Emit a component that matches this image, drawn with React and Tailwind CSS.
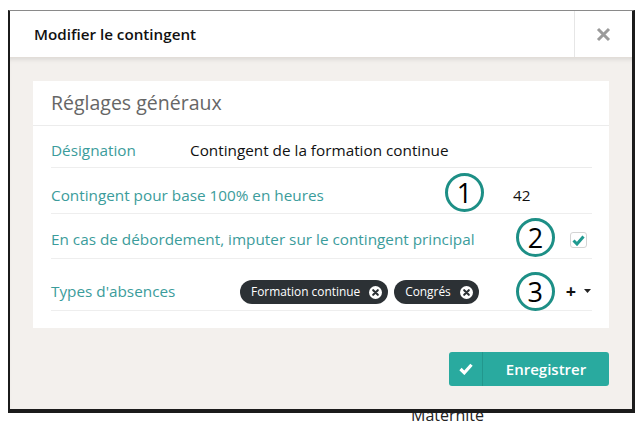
import React from 'react'

const font = { fontFamily: '"Open Sans", "Noto Sans", sans-serif' }

const Marker = ({ n }) => (
  <div className="w-[39px] h-[39px] rounded-full border-[3px] border-[#1d8f86] bg-white flex items-center justify-center text-[27px] font-normal text-black leading-none">
    {n}
  </div>
)

const Tag = ({ label }) => (
  <span className="flex items-center h-[24px] pl-[11px] pr-[6px] rounded-full bg-[#2c3135] text-white text-[11.9px] leading-none">
    <span>{label}</span>
    <svg className="ml-[9px]" width="13" height="13" viewBox="0 0 14 14">
      <circle cx="7" cy="7" r="7" fill="#fff" />
      <path d="M4.5 4.5 L9.5 9.5 M9.5 4.5 L4.5 9.5" stroke="#2c3135" strokeWidth="2.2" strokeLinecap="round" />
    </svg>
  </span>
)

export default function App() {
  return (
    <div className="relative w-[642px] h-[422px] bg-white overflow-hidden" style={font}>
      {/* leftover page text behind the modal */}
      <div className="absolute left-[411px] top-[403px] text-[16px] text-[#222]">Maternité</div>

      <div className="relative ml-[8px] mt-[10px] w-[627px] h-[403px] flex flex-col bg-white border-t border-t-[#8a8a8a] border-l-2 border-l-[#1b1b1b] border-r-[3px] border-r-[#1b1b1b] border-b-4 border-b-[#1b1b1b]">
        {/* header */}
        <div className="flex h-[46px] bg-white">
          <div className="flex-1 flex items-center pl-[24px] text-[15.2px] font-semibold text-[#111]">
            Modifier le contingent
          </div>
          <div className="w-[58px] flex items-center justify-center border-l border-[#e6e6e6]">
            <svg width="15" height="15" viewBox="0 0 15 15">
              <path d="M2 2 L13 13 M13 2 L2 13" stroke="#9a9a9a" strokeWidth="3" />
            </svg>
          </div>
        </div>

        {/* body */}
        <div className="flex-1 bg-[#f3f0ed] px-[23px] pt-[23px] border-t border-[#e2ddd8] shadow-[inset_0_4px_5px_-3px_rgba(0,0,0,0.12)]">
          <div className="bg-white pb-[17px]">
            <div className="h-[45px] flex items-center px-[18px] border-b border-[#ececec] text-[19.5px] text-[#666]">
              Réglages généraux
            </div>

            <div className="pl-[18px] pr-[17px] text-[15.3px]">
              {/* row 1 */}
              <div className="flex items-end h-[42px]">
                <div className="w-[139px] h-full flex items-end pb-[5px] border-b border-[#eeeeee] text-[#3b9c9b]">Désignation</div>
                <div className="flex-1 h-full flex items-end pb-[5px] border-b border-[#ebebeb] text-[#111]">
                  Contingent de la formation continue
                </div>
              </div>

              {/* row 2 */}
              <div className="flex items-end h-[46px] border-b border-[#eeeeee]">
                <div className="flex-1 pb-[6px] text-[#3b9c9b]">Contingent pour base 100% en heures</div>
                <div className="mb-[1px] mr-[21px]"><Marker n="1" /></div>
                <div className="w-[87px] pl-[8px] pb-[6px] text-[#111]">42</div>
              </div>

              {/* row 3 */}
              <div className="flex items-end h-[45px] border-b border-[#eeeeee]">
                <div className="flex-1 pb-[7px] text-[#3b9c9b]">En cas de débordement, imputer sur le contingent principal</div>
                <div className="mb-[1px] mr-[15px]"><Marker n="2" /></div>
                <div className="w-[22px] h-full flex items-end pb-[10px]">
                  <div className="w-[17px] h-[16px] rounded-[3px] border border-[#d4d4d4] flex items-center justify-center">
                    <svg width="13" height="11" viewBox="0 0 13 11">
                      <path d="M1.5 5.5 L5 9 L11.5 1.5" fill="none" stroke="#1f9a90" strokeWidth="3" />
                    </svg>
                  </div>
                </div>
              </div>

              {/* row 4 */}
              <div className="flex items-end h-[52px] border-b border-[#eeeeee]">
                <div className="w-[189px] pb-[7px] text-[#3b9c9b]">Types d'absences</div>
                <div className="flex gap-[6px] pb-[6px]">
                  <Tag label="Formation continue" />
                  <Tag label="Congrés" />
                </div>
                <div className="flex-1" />
                <div className="-mb-[1px] mr-[11px]"><Marker n="3" /></div>
                <div className="flex items-center pb-[10px] text-[#111]">
                  <span className="text-[18px] font-bold leading-none">+</span>
                  <svg className="ml-[8px] mr-[1px]" width="7" height="4" viewBox="0 0 7 4">
                    <path d="M0 0 L7 0 L3.5 4 Z" fill="#222" />
                  </svg>
                </div>
              </div>
            </div>
          </div>

          {/* footer */}
          <div className="flex justify-end mt-[24px]">
            <button className="flex h-[34px] w-[160px] rounded-[3px] bg-[#29aa9f] text-white overflow-hidden">
              <span className="w-[34px] h-full flex items-center justify-center border-r border-[#22978d]">
                <svg width="14" height="12" viewBox="0 0 14 12">
                  <path d="M1.5 6 L5.3 9.8 L12.5 1.8" fill="none" stroke="#fff" strokeWidth="3.2" />
                </svg>
              </span>
              <span className="flex-1 h-full flex items-center justify-center text-[15px] font-semibold">
                Enregistrer
              </span>
            </button>
          </div>
        </div>
      </div>
    </div>
  )
}
